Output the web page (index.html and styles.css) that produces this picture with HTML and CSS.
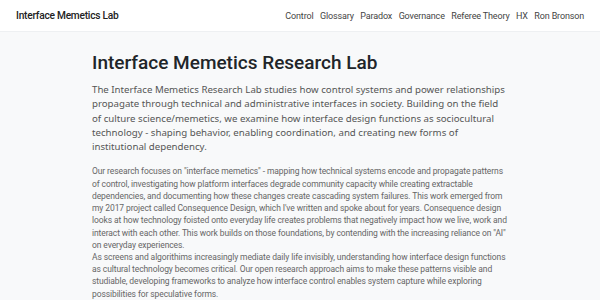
FILE: index.html
```html
<!DOCTYPE html>
<html lang="en">
<head>
    <meta charset="UTF-8">
    <title>Interface Memetics Lab</title>
    <link rel="stylesheet" href="styles.css">
</head>
<body>
    <header class="topbar">
        <a class="brand" href="#">Interface Memetics Lab</a>
        <nav class="nav">
            <a href="#">Control</a>
            <a href="#">Glossary</a>
            <a href="#">Paradox</a>
            <a href="#">Governance</a>
            <a href="#">Referee Theory</a>
            <a href="#">HX</a>
            <a href="#">Ron Bronson</a>
        </nav>
    </header>

    <main class="content">
        <h1>Interface Memetics Research Lab</h1>

        <p class="lead">The Interface Memetics Research Lab studies how control systems and power relationships propagate through technical and administrative interfaces in society. Building on the field of culture science/memetics, we examine how interface design functions as sociocultural technology - shaping behavior, enabling coordination, and creating new forms of institutional dependency.</p>

        <div class="body-text">
            <p>Our research focuses on "interface memetics" - mapping how technical systems encode and propagate patterns of control, investigating how platform interfaces degrade community capacity while creating extractable dependencies, and documenting how these changes create cascading system failures. This work emerged from my 2017 project called Consequence Design, which I've written and spoke about for years. Consequence design looks at how technology foisted onto everyday life creates problems that negatively impact how we live, work and interact with each other. This work builds on those foundations, by contending with the increasing reliance on "AI" on everyday experiences.</p>
            <p>As screens and algorithims increasingly mediate daily life invisibly, understanding how interface design functions as cultural technology becomes critical. Our open research approach aims to make these patterns visible and studiable, developing frameworks to analyze how interface control enables system capture while exploring possibilities for speculative forms.</p>
        </div>
    </main>
</body>
</html>
```

FILE: styles.css
```css
body {
    font-family: Roboto, 'Open Sans', sans-serif;
    background-color: #f8f9fa;
    margin: 0;
    color: #333;
}

a {
    text-decoration: none;
}

.topbar {
    height: 32px;
    background-color: #fff;
    border-bottom: 1px solid #eef0f2;
    display: flex;
    align-items: center;
    justify-content: space-between;
    padding: 0 16px;
    box-sizing: border-box;
}

.brand {
    font-size: 10.2px;
    font-weight: 500;
    letter-spacing: -0.25px;
    color: #222;
}

.nav {
    display: flex;
    gap: 6.5px;
}

.nav a {
    font-size: 9px;
    letter-spacing: -0.15px;
    color: #444;
}

.content {
    width: 416px;
    margin: 0 auto;
    padding-top: 19px;
}

.content h1 {
    font-size: 19px;
    font-weight: 500;
    line-height: 23px;
    color: #212529;
    margin: 0 0 9px;
}

/* Noto Sans wraps this paragraph the same way as the original */
.lead {
    font-family: 'Noto Sans', 'Open Sans', sans-serif;
    font-size: 9.69px;
    line-height: 14.3px;
    color: #555;
    margin: 0 0 11px;
}

.body-text p {
    font-size: 8.5px;
    line-height: 12.2px;
    letter-spacing: -0.1px;
    color: #666;
    margin: 0;
}
```
